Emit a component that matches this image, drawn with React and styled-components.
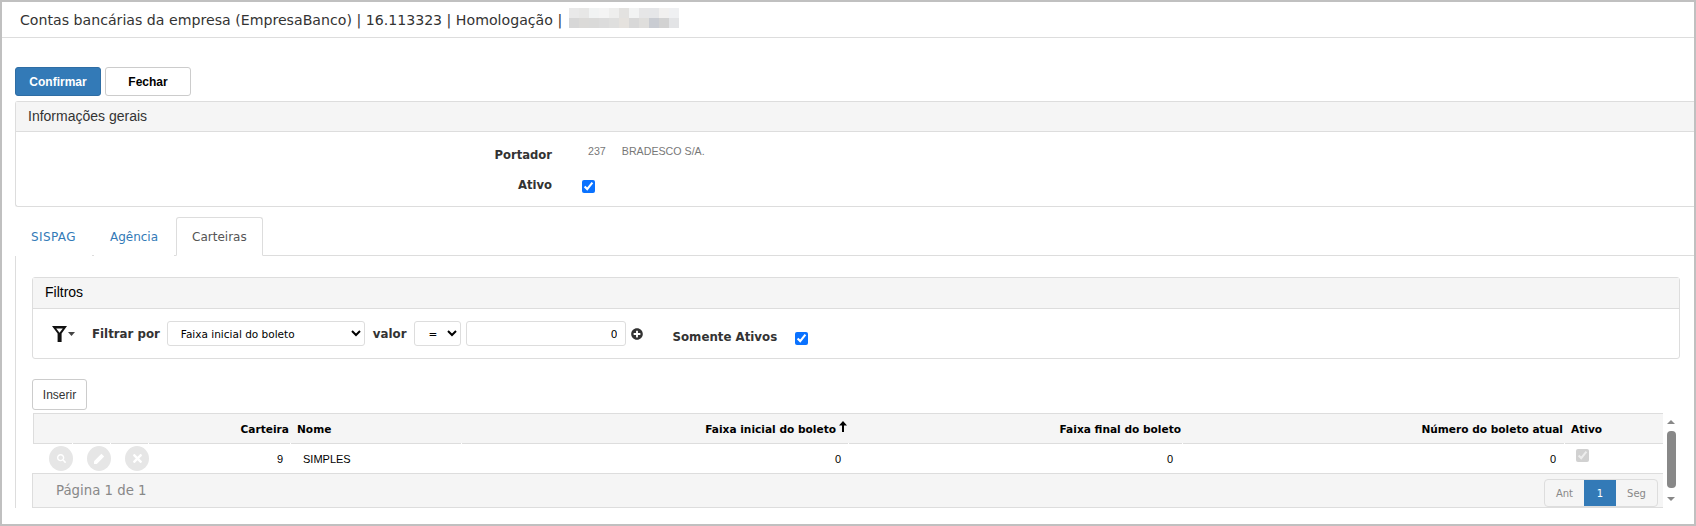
import React from 'react';
import styled, { createGlobalStyle } from 'styled-components';
import { FaSearch, FaTimes, FaPlusCircle } from 'react-icons/fa';

const GlobalStyle = createGlobalStyle`
html, body {
  margin: 0;
  padding: 0;
  background: #fff;
}
`;

const Frame = styled.div`
box-sizing: border-box;
width: 1696px;
height: 526px;
border: 2px solid #c0c0c0;
overflow: hidden;
background: #fff;
font-family: "DejaVu Sans", Verdana, sans-serif;
`;

const TitleBar = styled.div`
box-sizing: border-box;
height: 36px;
padding: 0 18px;
display: flex;
align-items: center;
gap: 4px;
border-bottom: 1px solid #ddd;
font-size: 14.15px;
color: #333;
`;

const Mosaic = styled.div`
display: grid;
grid-template-columns: repeat(11, 10px);
grid-auto-rows: 10px;
margin: -3px 0 0 3px;
`;

const MosaicCell = styled.span`
background: ${(p) => p.$color};
`;

const Toolbar = styled.div`
display: flex;
gap: 4px;
padding: 29px 0 0 13px;
`;

const Button = styled.button`
box-sizing: border-box;
width: ${(p) => p.$width}px;
height: 29px;
padding: 0;
border-radius: 3px;
border: 1px solid ${(p) => (p.$primary ? '#2e6da4' : '#ccc')};
background: ${(p) => (p.$primary ? '#337ab7' : '#fff')};
color: ${(p) => (p.$primary ? '#fff' : '#000')};
font-family: "Liberation Sans", Arial, sans-serif;
font-size: 12px;
font-weight: bold;
`;

const GeneralPanel = styled.section`
box-sizing: border-box;
margin: 5px 0 0 13px;
height: 106px;
border: 1px solid #ddd;
border-right: 0;
border-radius: 3px 0 0 3px;
`;

const PanelHeading = styled.div`
box-sizing: border-box;
height: ${(p) => p.$height}px;
padding: 0 ${(p) => p.$pad}px 2px;
display: flex;
align-items: center;
background: #f5f5f5;
border-bottom: 1px solid #ddd;
font-family: "Liberation Sans", Arial, sans-serif;
font-size: 14px;
color: ${(p) => p.$color || '#333'};
`;

const FormRow = styled.div`
display: grid;
grid-template-columns: 536px 1fr;
column-gap: 30px;
align-items: center;
height: ${(p) => p.$height}px;
margin-top: ${(p) => p.$lift || 0}px;
`;

const FormLabel = styled.label`
margin-top: -2px;
text-align: right;
font-size: 11.6px;
font-weight: bold;
color: #333;
`;

const PorterValue = styled.div`
display: flex;
gap: 16px;
margin: -10px 0 0 6px;
font-family: "Liberation Sans", Arial, sans-serif;
font-size: 10.67px;
color: #777;
`;

const Check = styled.input.attrs({ type: 'checkbox' })`
width: 13px;
height: 13px;
margin: 0;
accent-color: #0a72ff;
`;

const Tabs = styled.div`
display: flex;
gap: 2px;
height: 38px;
margin-top: 10px;
padding-left: 13px;
`;

const Tab = styled.div`
box-sizing: border-box;
height: 39px;
display: flex;
align-items: center;
padding: 0 15px;
font-size: 12px;
letter-spacing: ${(p) => (p.$spaced ? '0.4px' : '0')};
position: relative;
color: ${(p) => (p.$active ? '#555' : '#337ab7')};
background: #fff;
border: 1px solid ${(p) => (p.$active ? '#ddd' : 'transparent')};
border-bottom: 1px solid ${(p) => (p.$active ? '#fff' : 'transparent')};
border-radius: 3px 3px 0 0;
`;

const TabContent = styled.div`
margin-left: 13px;
padding: 21px 14px 0 16px;
border-top: 1px solid #ddd;
border-left: 1px solid #ddd;
`;

const FilterPanel = styled.section`
box-sizing: border-box;
height: 82px;
border: 1px solid #ddd;
border-radius: 3px;
`;

const FilterRow = styled.div`
display: flex;
align-items: center;
height: 49px;
padding: 0 0 0 19px;
font-size: 11.8px;
font-weight: bold;
color: #333;
`;

const FilterIconWrap = styled.span`
display: flex;
width: 40px;
`;

const NativeSelect = styled.select`
box-sizing: border-box;
height: 25px;
width: ${(p) => p.$width}px;
margin: 0 ${(p) => p.$after}px 0 ${(p) => p.$before}px;
padding: 0 0 0 9px;
border: 1px solid #ddd;
border-radius: 3px;
background: #fff;
font-family: inherit;
font-size: 10.5px;
color: #000;
`;

const NumberInput = styled.input`
box-sizing: border-box;
width: 160px;
height: 25px;
padding: 0 8px;
border: 1px solid #ddd;
border-radius: 3px;
text-align: right;
font-family: inherit;
font-size: 10.5px;
color: #000;
`;

const PlusIcon = styled(FaPlusCircle)`
margin: 0 0 0 5px;
font-size: 12px;
color: #333;
`;

const OnlyActive = styled.span`
display: flex;
align-items: center;
gap: 18px;
margin: 7px 0 0 29px;
`;

const OnlyActiveCheck = styled(Check)`
margin-top: 2px;
`;

const InsertButton = styled.button`
display: block;
box-sizing: border-box;
width: 55px;
height: 31px;
margin-top: 20px;
padding: 0;
border: 1px solid #ccc;
border-radius: 3px;
background: #fff;
font-family: "Liberation Sans", Arial, sans-serif;
font-size: 12px;
color: #333;
`;

const GridArea = styled.div`
display: flex;
margin-top: 3px;
`;

const DataTable = styled.div`
width: 1631px;
`;

const COLUMNS = '39px 38px 38px 142px 171px 387px 334px 382px 100px';

const HeaderRow = styled.div`
display: grid;
grid-template-columns: ${COLUMNS};
height: 31px;
margin-left: 1px;
box-sizing: border-box;
background: #f5f5f5;
border-top: 1px solid #ddd;
border-left: 1px solid #ddd;
border-bottom: 1px solid #ddd;
`;

const HeaderCell = styled.div`
position: relative;
display: flex;
align-items: center;
justify-content: ${(p) => (p.$right ? 'flex-end' : 'flex-start')};
padding: ${(p) => p.$padding || '0 2px'};
font-size: 10.6px;
font-weight: bold;
color: #000;
&::after {
  content: '';
  position: absolute;
  right: 0;
  bottom: -1px;
  width: 1px;
  height: 1px;
  background: #fff;
}
`;

const DataRow = styled.div`
display: grid;
grid-template-columns: ${COLUMNS};
height: 29px;
margin-left: 2px;
`;

const DataCell = styled.div`
display: flex;
align-items: ${(p) => (p.$top ? 'flex-start' : 'center')};
justify-content: ${(p) => (p.$right ? 'flex-end' : 'flex-start')};
padding: ${(p) => p.$padding || '0'};
font-family: "Liberation Sans", Arial, sans-serif;
font-size: 11px;
color: #000;
`;

const RoundAction = styled.span`
display: flex;
align-items: center;
justify-content: center;
width: 25px;
height: 25px;
margin-left: ${(p) => p.$offset}px;
border-radius: 50%;
background: #e6e6e6;
color: #fff;
font-size: ${(p) => p.$size}px;
`;

const GridFooter = styled.div`
box-sizing: border-box;
height: 35px;
display: flex;
align-items: center;
justify-content: space-between;
padding: 0 5px 0 23px;
background: #f5f5f5;
border: 1px solid #ddd;
border-right: 0;
font-size: 13.3px;
color: #888;
`;

const Pager = styled.div`
display: flex;
box-sizing: border-box;
height: 28px;
align-self: flex-end;
overflow: hidden;
font-size: 10px;
color: #888;
border: 1px solid #ddd;
border-radius: 4px;
`;

const PagerItem = styled.span`
display: flex;
align-items: center;
justify-content: center;
width: ${(p) => p.$width}px;
background: ${(p) => (p.$active ? '#337ab7' : 'transparent')};
color: ${(p) => (p.$active ? '#fff' : '#888')};
`;

const ScrollBar = styled.div`
width: 16px;
display: flex;
flex-direction: column;
align-items: center;
padding-top: 7px;
`;

const ScrollArrow = styled.span`
width: 0;
height: 0;
border-left: 4px solid transparent;
border-right: 4px solid transparent;
border-${(p) => (p.$down ? 'top' : 'bottom')}: 4px solid #888;
`;

const ScrollThumb = styled.span`
width: 9px;
height: 57px;
margin: 7px 0 9px;
border-radius: 4px;
background: #888;
`;

const FilterGlyph = () => (
  <svg width="23" height="16" viewBox="0 0 23 16">
    <path fillRule="evenodd" d="M0 0h15L9.6 7.5V16H5.6V7.5zM4.2 2.6h6.6L7.5 6.8z" fill="#111" />
    <path d="M16 6h7l-3.5 4z" fill="#444" />
  </svg>
);

const PencilGlyph = () => (
  <svg width="13" height="13" viewBox="0 0 13 13">
    <path d="M1 9.2L8.4 1.8l2.8 2.8-7.4 7.4H1z" fill="#fff" />
  </svg>
);

const UpArrow = () => (
  <svg width="8" height="11" viewBox="0 0 8 11" style={{ marginLeft: 3, marginTop: -4 }}>
    <path d="M4 0L8 4.4H5V11H3V4.4H0z" fill="#000" />
  </svg>
);

const MOSAIC = [
  '#e9e9e9', '#e7e7e6', '#f1f3f3', '#f4f4f4', '#eeeeed', '#e3e2e0', '#f2f3f3', '#e6e6e7', '#e5e6e8', '#f1f0ef', '#eff0f2',
  '#d7d7d7', '#dbdad8', '#dadad9', '#dcdcdc', '#dfdfde', '#e5e2de', '#d8d8d8', '#dfdedc', '#c9ccd2', '#d2d2d2', '#e3e4e6',
];

const App = () => (
  <>
    <GlobalStyle />
    <Frame>
      <TitleBar>
        Contas bancárias da empresa (EmpresaBanco) | 16.113323 | Homologação |
        <Mosaic>
          {MOSAIC.map((color, i) => <MosaicCell key={i} $color={color} />)}
        </Mosaic>
      </TitleBar>

      <Toolbar>
        <Button $primary $width={86}>Confirmar</Button>
        <Button $width={86}>Fechar</Button>
      </Toolbar>

      <GeneralPanel>
        <PanelHeading $height={30} $pad={12}>Informações gerais</PanelHeading>
        <FormRow $height={48}>
          <FormLabel>Portador</FormLabel>
          <PorterValue><span>237</span><span>BRADESCO S/A.</span></PorterValue>
        </FormRow>
        <FormRow $height={14} $lift={-1}>
          <FormLabel>Ativo</FormLabel>
          <Check defaultChecked />
        </FormRow>
      </GeneralPanel>

      <Tabs>
        <Tab $spaced>SISPAG</Tab>
        <Tab>Agência</Tab>
        <Tab $active>Carteiras</Tab>
      </Tabs>

      <TabContent>
        <FilterPanel>
          <PanelHeading $height={31} $pad={12} $color="#000">Filtros</PanelHeading>
          <FilterRow>
            <FilterIconWrap><FilterGlyph /></FilterIconWrap>
            Filtrar por
            <NativeSelect $width={198} $before={7} $after={8}>
              <option>Faixa inicial do boleto</option>
            </NativeSelect>
            valor
            <NativeSelect $width={47} $before={8} $after={5}>
              <option>=</option>
            </NativeSelect>
            <NumberInput defaultValue="0" />
            <PlusIcon />
            <OnlyActive>Somente Ativos <OnlyActiveCheck defaultChecked /></OnlyActive>
          </FilterRow>
        </FilterPanel>

        <InsertButton>Inserir</InsertButton>

        <GridArea>
          <DataTable>
            <HeaderRow>
              <HeaderCell /><HeaderCell /><HeaderCell />
              <HeaderCell $right>Carteira</HeaderCell>
              <HeaderCell $padding="0 6px">Nome</HeaderCell>
              <HeaderCell $right>Faixa inicial do boleto<UpArrow /></HeaderCell>
              <HeaderCell $right>Faixa final do boleto</HeaderCell>
              <HeaderCell $right>Número do boleto atual</HeaderCell>
              <HeaderCell $padding="0 6px">Ativo</HeaderCell>
            </HeaderRow>
            <DataRow>
              <DataCell><RoundAction $offset={15} $size={9}><FaSearch /></RoundAction></DataCell>
              <DataCell><RoundAction $offset={14} $size={10}><PencilGlyph /></RoundAction></DataCell>
              <DataCell><RoundAction $offset={14} $size={13}><FaTimes /></RoundAction></DataCell>
              <DataCell $right $padding="0 8px 0 0">9</DataCell>
              <DataCell $padding="0 0 0 12px">SIMPLES</DataCell>
              <DataCell $right $padding="0 8px 0 0">0</DataCell>
              <DataCell $right $padding="0 10px 0 0">0</DataCell>
              <DataCell $right $padding="0 9px 0 0">0</DataCell>
              <DataCell $top $padding="5px 0 0 11px"><Check defaultChecked disabled /></DataCell>
            </DataRow>
            <GridFooter>
              <span>Página 1 de 1</span>
              <Pager>
                <PagerItem $width={39}>Ant</PagerItem>
                <PagerItem $width={32} $active>1</PagerItem>
                <PagerItem $width={41}>Seg</PagerItem>
              </Pager>
            </GridFooter>
          </DataTable>
          <ScrollBar>
            <ScrollArrow />
            <ScrollThumb />
            <ScrollArrow $down />
          </ScrollBar>
        </GridArea>
      </TabContent>
    </Frame>
  </>
);

export default App;
